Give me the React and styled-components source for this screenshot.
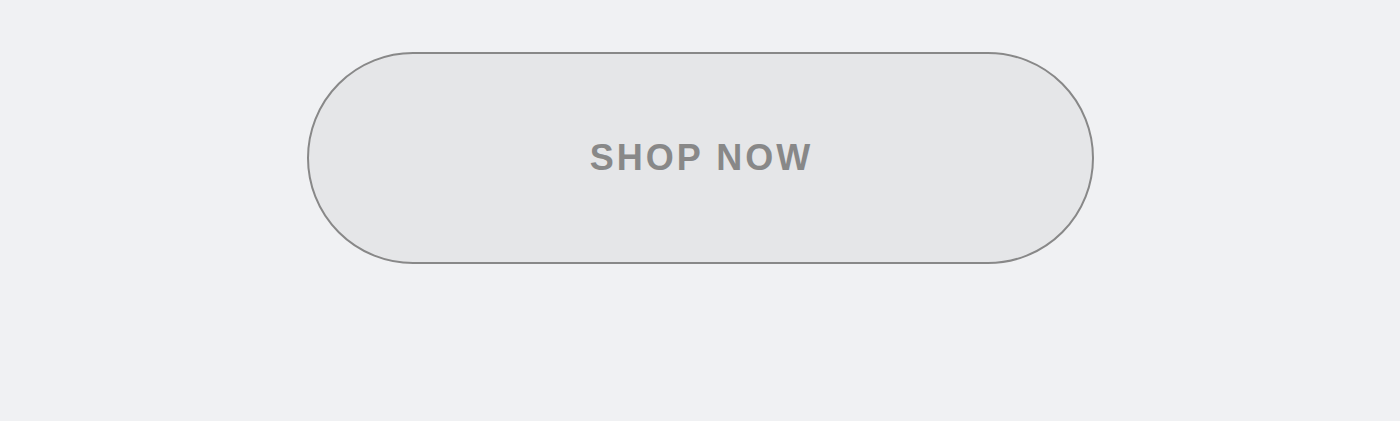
import styled, { createGlobalStyle } from "styled-components";

const GlobalStyle = createGlobalStyle`
  body {
    margin: 0;
    background: #f0f1f3;
    font-family: "Liberation Sans", Arial, sans-serif;
  }
`;

const Page = styled.div`
  min-height: 421px;
  display: flex;
  justify-content: center;
  align-items: flex-start;
  padding-top: 52px;
  box-sizing: border-box;
`;

const ShopButton = styled.button`
  width: 787px;
  height: 212px;
  box-sizing: border-box;
  border: 2.5px solid #888888;
  border-radius: 106px;
  background: #e5e6e8;
  color: #888888;
  font-family: "Liberation Sans", Arial, sans-serif;
  font-weight: 700;
  font-size: 36px;
  letter-spacing: 3px;
  text-indent: 3px;
  text-transform: uppercase;
  padding: 0;
  cursor: pointer;
  display: flex;
  align-items: center;
  justify-content: center;
`;

const App = () => {
  return (
    <>
      <GlobalStyle />
      <Page>
        <ShopButton>Shop Now</ShopButton>
      </Page>
    </>
  );
};

export default App;
